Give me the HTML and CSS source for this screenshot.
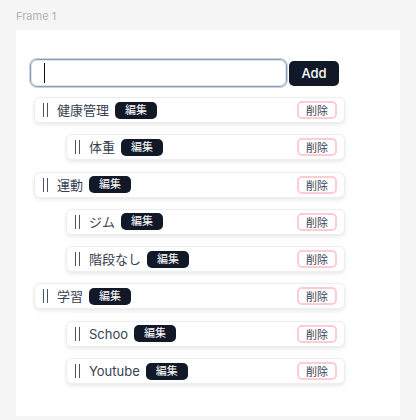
FILE: index.html
```html
<!DOCTYPE html>
<html lang="ja">
<head>
<meta charset="utf-8">
<link rel="stylesheet" href="styles.css">
</head>
<body>
<div class="label">Frame 1</div>
<div class="frame">
  <div class="form">
    <div class="input"><span class="caret"></span></div>
    <button class="add">Add</button>
  </div>
  <div class="list">
    <div class="row parent"><span class="handle"></span><span class="name">健康管理</span><span class="edit">編集</span><span class="del">削除</span></div>
    <div class="row child"><span class="handle"></span><span class="name">体重</span><span class="edit">編集</span><span class="del">削除</span></div>
    <div class="row parent"><span class="handle"></span><span class="name">運動</span><span class="edit">編集</span><span class="del">削除</span></div>
    <div class="row child"><span class="handle"></span><span class="name">ジム</span><span class="edit">編集</span><span class="del">削除</span></div>
    <div class="row child"><span class="handle"></span><span class="name">階段なし</span><span class="edit">編集</span><span class="del">削除</span></div>
    <div class="row parent"><span class="handle"></span><span class="name">学習</span><span class="edit">編集</span><span class="del">削除</span></div>
    <div class="row child"><span class="handle"></span><span class="name">Schoo</span><span class="edit">編集</span><span class="del">削除</span></div>
    <div class="row child"><span class="handle"></span><span class="name">Youtube</span><span class="edit">編集</span><span class="del">削除</span></div>
  </div>
</div>
</body>
</html>
```
FILE: styles.css
```css
* { box-sizing: border-box; }
html, body { margin: 0; padding: 0; }
body {
  background: #f5f5f5;
  font-family: Inter, "Noto Sans CJK JP", sans-serif;
  width: 416px;
  height: 420px;
  overflow: hidden;
}
.label {
  font-size: 11px;
  color: #b3b3b3;
  padding: 10px 0 0 16px;
  height: 30px;
  line-height: 13px;
}
.frame {
  margin-left: 16px;
  width: 384px;
  height: 386px;
  background: #fff;
  padding: 29px 14px 0 14px;
}
.form {
  display: flex;
  align-items: center;
  gap: 2px;
}
.input {
  width: 257px;
  height: 28px;
  border: 1px solid #8a9bb5;
  border-radius: 7px;
  box-shadow: 0 0 0 1px #c9d3e2, inset 0 0 0 1px #dfe6f0;
  display: flex;
  align-items: center;
  padding-left: 13px;
}
.caret {
  width: 1px;
  height: 20px;
  background: #111;
}
.add {
  width: 50px;
  height: 25px;
  background: #111827;
  color: #fff;
  border: none;
  border-radius: 5px;
  font-family: Inter, sans-serif;
  font-size: 13px;
  font-weight: 500;
  padding: 0;
}
.list {
  margin-top: 10px;
  display: flex;
  flex-direction: column;
  gap: 11.3px;
}
.row {
  height: 26px;
  display: flex;
  align-items: center;
  border: 1px solid #eceef2;
  border-radius: 6px;
  box-shadow: 0 2px 4px rgba(0,0,0,0.09);
  padding: 0 7px 0 8px;
  background: #fff;
}
.parent { margin-left: 4px; width: 311px; }
.child { margin-left: 36px; width: 279px; }
.handle {
  width: 5px;
  height: 14px;
  border-left: 1.5px solid #4b5563;
  border-right: 1.5px solid #4b5563;
  margin-right: 9px;
}
.name {
  font-size: 13px;
  color: #374151;
  line-height: 16px;
}
.edit {
  margin-left: 6px;
  background: #111827;
  color: #fff;
  font-size: 11px;
  height: 17px;
  line-height: 17px;
  padding: 0 10px;
  border-radius: 5px;
}
.del {
  margin-left: auto;
  width: 40px;
  height: 18px;
  border: 2px solid #fecdd3;
  border-radius: 5px;
  font-size: 11px;
  color: #374151;
  display: flex;
  align-items: center;
  justify-content: center;
}
```
